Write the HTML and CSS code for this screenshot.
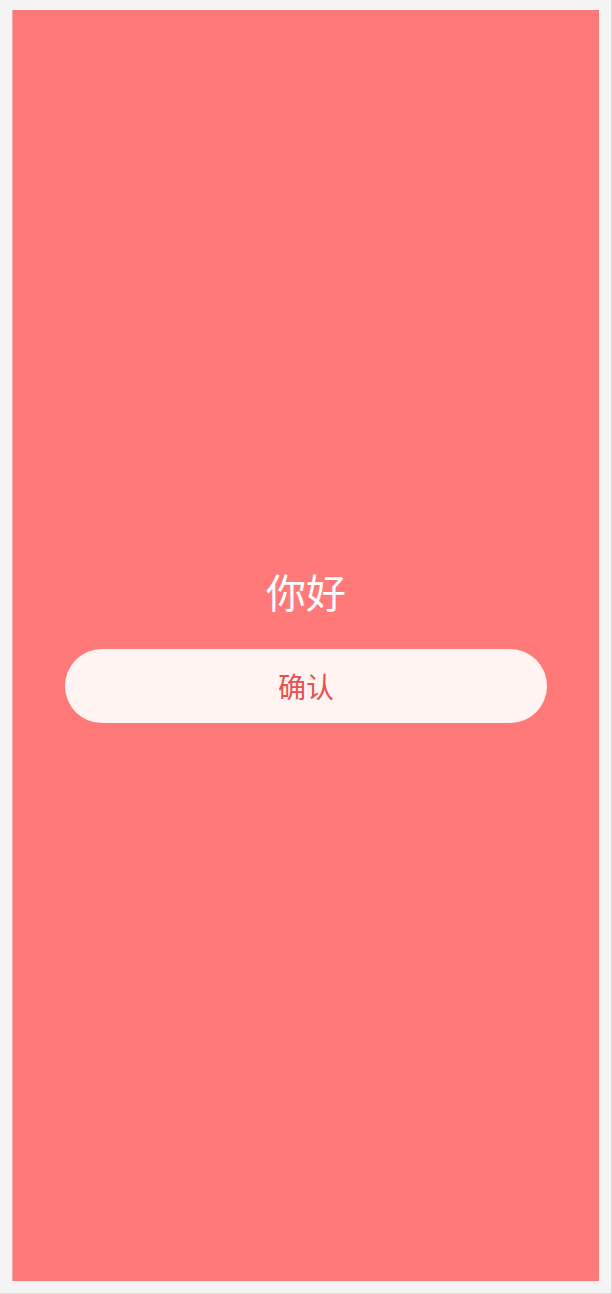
FILE: index.html
```html
<!DOCTYPE html>
<html lang="zh">
<head>
<meta charset="utf-8">
<link rel="stylesheet" href="styles.css">
<title>你好</title>
</head>
<body>
<main class="screen">
  <h1 class="greeting">你好</h1>
  <button class="confirm" type="button">确认</button>
</main>
</body>
</html>
```
FILE: styles.css
```css
html, body {
  margin: 0;
  height: 100%;
}
body {
  background: #f4f4f4;
  box-sizing: border-box;
  padding: 10px 12px 12px 12px;
  font-family: "Noto Sans CJK SC", "Noto Sans", sans-serif;
  border-right: 1px solid #d8d8d8;
  border-bottom: 1px solid #d8d8d8;
}
.screen {
  box-sizing: border-box;
  height: 100%;
  background: #ff7979;
  border-left: 1px solid #f0a8a8;
  display: flex;
  flex-direction: column;
  align-items: center;
  justify-content: center;
  padding-bottom: 6px;
}
.greeting {
  margin: 0 0 30px;
  font-size: 40px;
  font-weight: 400;
  line-height: 56px;
  color: #ffffff;
}
.confirm {
  width: 482px;
  height: 74px;
  border: none;
  border-radius: 37px;
  background: #fff4f2;
  color: #e8504f;
  font-family: inherit;
  font-size: 28px;
  padding: 0;
}
```
